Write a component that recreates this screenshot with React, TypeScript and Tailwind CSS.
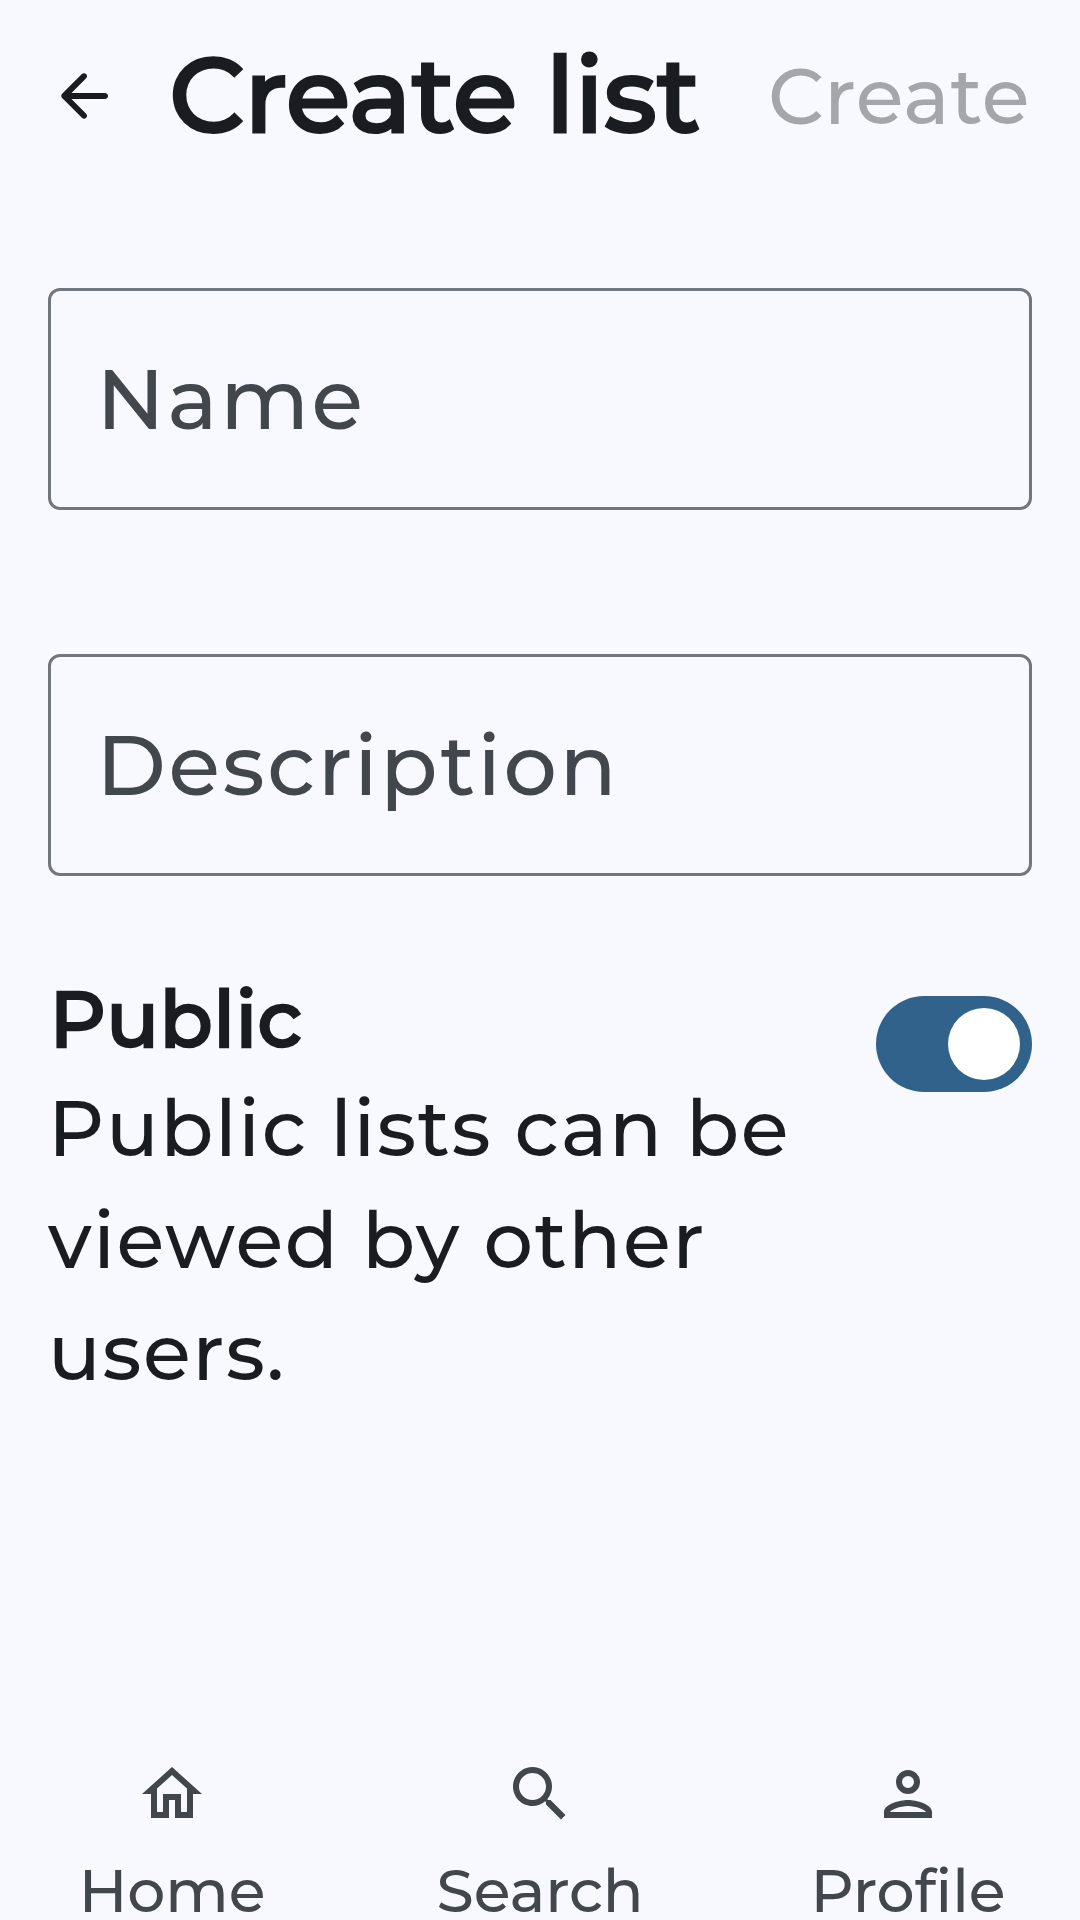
const tabs = [
  { label: 'Home', d: 'M12 5.69l5 4.5V18h-2v-6H9v6H7v-7.81l5-4.5M12 3L2 12h3v8h6v-6h2v6h6v-8h3L12 3z' },
  { label: 'Search', d: 'M15.5 14h-.79l-.28-.27C15.41 12.59 16 11.11 16 9.5 16 5.91 13.09 3 9.5 3S3 5.91 3 9.5 5.91 16 9.5 16c1.61 0 3.09-.59 4.23-1.57l.27.28v.79l5 4.99L20.49 19l-4.99-5zm-6 0C7.01 14 5 11.99 5 9.5S7.01 5 9.5 5 14 7.01 14 9.5 11.99 14 9.5 14z' },
  { label: 'Profile', d: 'M12 6a2 2 0 1 1 0 4 2 2 0 0 1 0-4m0 10c2.7 0 5.8 1.29 6 2H6c.23-.72 3.31-2 6-2m0-12a4 4 0 1 0 0 8 4 4 0 0 0 0-8zm0 10c-2.67 0-8 1.34-8 4v2h16v-2c0-2.66-5.33-4-8-4z' },
];

function Icon({ d }: { d: string }) {
  return (
    <svg viewBox="0 0 24 24" fill="currentColor" className="size-[72px] shrink-0">
      <path d={d} />
    </svg>
  );
}

function Field({ label }: { label: string }) {
  return (
    <div className="flex h-[222px] items-center rounded-[12px] border-[3px] border-[#72777f] px-[45.5px] text-[84px] tracking-[2.6px] text-[#42474e]">
      {label}
    </div>
  );
}

export default function App() {
  return (
    <div className="flex h-[1920px] w-[1080px] flex-col overflow-hidden bg-[#f8f9ff] font-['Montserrat',Lato,sans-serif] font-medium text-[#191c20]">
      <header className="flex h-[192px] shrink-0 items-center pr-[50px] pl-[48px]">
        <Icon d="M19 11H7.83l4.88-4.88c.39-.39.39-1.03 0-1.42-.39-.39-1.02-.39-1.41 0l-6.59 6.59c-.39.39-.39 1.02 0 1.41l6.59 6.59c.39.39 1.02.39 1.41 0 .39-.39.39-1.02 0-1.41L7.83 13H19c.55 0 1-.45 1-1s-.45-1-1-1z" />
        <h1 className="ml-[49.3px] pb-[3px] text-[105px] whitespace-nowrap [-webkit-text-stroke:3px_#191c20]">Create list</h1>
        <button className="ml-auto text-[78px] tracking-[0.6px] text-[#a3a6aa]">Create</button>
      </header>
      <main className="flex flex-1 flex-col px-[48px] pt-[96px]">
        <div className="flex flex-col gap-[144px]">
          <Field label="Name" />
          <Field label="Description" />
        </div>
        <div className="mt-[96px] flex justify-between">
          <div className="w-[760px]">
            <h2 className="mb-[6px] ml-[1.5px] text-[78px] leading-[94px] tracking-[0.45px] [-webkit-text-stroke:2.5px_#191c20]">Public</h2>
            <p className="text-[78px] leading-[112px] tracking-[1.56px]">Public lists can be viewed by other users.</p>
          </div>
          <div className="mt-[24px] flex h-[96px] w-[156px] shrink-0 items-center justify-end rounded-full bg-[#30628c] px-[12px]">
            <div className="size-[72px] rounded-full bg-white" />
          </div>
        </div>
      </main>
      <nav className="grid h-[162px] shrink-0 grid-cols-3 gap-[24px]">
        {tabs.map((t) => (
          <div key={t.label} className="flex flex-col items-center text-[#42474e]">
            <Icon d={t.d} />
            <span className="mt-[31px] text-[60px] leading-[59px] tracking-[-0.1px]">{t.label}</span>
          </div>
        ))}
      </nav>
    </div>
  );
}
